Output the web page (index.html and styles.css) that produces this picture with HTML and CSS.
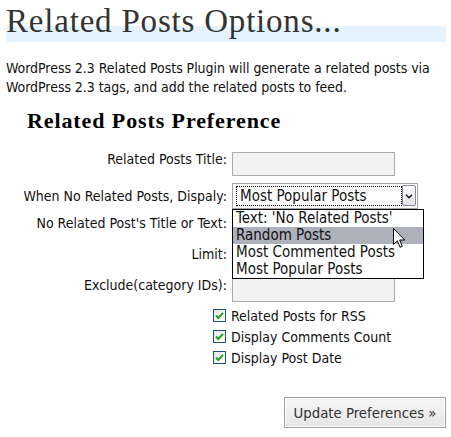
FILE: index.html
```html
<!DOCTYPE html>
<html>
<head>
<meta charset="utf-8">
<link rel="stylesheet" href="styles.css">
</head>
<body>
<div class="wrap">
  <h2 class="title">Related Posts Options...</h2>
  <p class="intro">WordPress 2.3 Related Posts Plugin will generate a related posts via<br>WordPress 2.3 tags, and add the related posts to feed.</p>
  <h3 class="sub">Related Posts Preference</h3>
  <div class="prefs">
    <div class="lbl">Related Posts Title:</div>
    <div class="field"><div class="input"></div></div>

    <div class="lbl lbl-sel">When No Related Posts, Dispaly:</div>
    <div class="field">
      <div class="select">
        <div class="sel-text">Most Popular Posts</div>
        <div class="sel-btn">
          <svg width="14" height="20" viewBox="0 0 14 20"><path d="M3.5 8.5 L7 12 L10.5 8.5" fill="none" stroke="#1a1a1a" stroke-width="1.8"/></svg>
        </div>
        <div class="dropdown">
          <div class="opt">Text: 'No Related Posts'</div>
          <div class="opt hl">Random Posts</div>
          <div class="opt">Most Commented Posts</div>
          <div class="opt">Most Popular Posts</div>
          <svg class="cursor" width="13" height="21" viewBox="0 0 13 21"><path d="M0.5 0.5 L0.5 16.5 L4.3 12.8 L7 19.3 L9.3 18.3 L6.7 12 L11.7 12 Z" fill="#fff" stroke="#000" stroke-width="1" stroke-linejoin="miter"/></svg>
        </div>
      </div>
    </div>

    <div class="lbl">No Related Post's Title or Text:</div>
    <div class="field"><div class="input"></div></div>

    <div class="lbl">Limit:</div>
    <div class="field"><div class="input"></div></div>

    <div class="lbl">Exclude(category IDs):</div>
    <div class="field"><div class="input"></div></div>
  </div>

  <div class="checks">
    <div class="chk"><span class="box"><svg width="11" height="11" viewBox="0 0 11 11"><path d="M2 5.5 L4.3 8 L9 2.8" fill="none" stroke="#1fa51f" stroke-width="2"/></svg></span><span>Related Posts for RSS</span></div>
    <div class="chk"><span class="box"><svg width="11" height="11" viewBox="0 0 11 11"><path d="M2 5.5 L4.3 8 L9 2.8" fill="none" stroke="#1fa51f" stroke-width="2"/></svg></span><span>Display Comments Count</span></div>
    <div class="chk"><span class="box"><svg width="11" height="11" viewBox="0 0 11 11"><path d="M2 5.5 L4.3 8 L9 2.8" fill="none" stroke="#1fa51f" stroke-width="2"/></svg></span><span>Display Post Date</span></div>
  </div>

  <div class="actions">
    <button class="btn" type="button">Update Preferences »</button>
  </div>
</div>
</body>
</html>
```

FILE: styles.css
```css
html, body {
  margin: 0;
  padding: 0;
  background: #fff;
}
body {
  font-family: "DejaVu Sans Condensed", "DejaVu Sans", sans-serif;
  font-size: 14px;
  color: #111;
}
.title {
  margin: 0 5px 0 6px;
  height: 42px;
  box-sizing: border-box;
  padding-top: 1px;
  font: normal 33px/40px "Liberation Serif", serif;
  letter-spacing: 0.8px;
  color: #333;
  background: linear-gradient(to bottom, transparent 26px, #e5f3ff 26px);
}
.intro {
  margin: 17px 0 0 6px;
  line-height: 19px;
  font-size: 14px;
  letter-spacing: -0.05px;
}
.sub {
  margin: 11px 0 0 27px;
  font: bold 22px/26px "Liberation Serif", serif;
  letter-spacing: 0.9px;
  color: #000;
}
.prefs {
  display: grid;
  grid-template-columns: 227px 192px;
  column-gap: 5px;
  row-gap: 7px;
  margin-top: 18px;
}
.lbl {
  text-align: right;
  line-height: 16px;
  white-space: nowrap;
  margin-top: -1px;
}
.lbl-sel {
  margin-top: 5px;
}
.input {
  width: 163px;
  height: 24px;
  box-sizing: border-box;
  border: 1px solid #aaa;
  background: #f2f2f2;
}
.select {
  position: relative;
  width: 186px;
  height: 26px;
  box-sizing: border-box;
  border: 1px solid #a5a5a5;
  background: #fff;
  display: flex;
  align-items: flex-start;
  padding: 2px 1px 2px 3px;
}
.sel-text {
  flex: 1;
  height: 20px;
  box-sizing: border-box;
  border: 1px dotted #000;
  line-height: 18px;
  padding-left: 3px;
  font-size: 15px;
}
.sel-btn {
  width: 14px;
  height: 21px;
  margin-top: -1px;
  box-sizing: border-box;
  border: 1px solid #7f8a99;
  border-radius: 2px;
  background: linear-gradient(#fdfdfd, #dfe3ea);
  display: flex;
  align-items: center;
  justify-content: center;
}
.sel-btn svg {
  display: block;
}
.dropdown {
  position: absolute;
  left: -1px;
  top: 25px;
  width: 192px;
  box-sizing: border-box;
  border: 1px solid #000;
  background: #fff;
}
.opt {
  height: 17px;
  line-height: 17px;
  padding-left: 3px;
  font-size: 15px;
  white-space: nowrap;
}
.opt.hl {
  background: #aeb0bc;
}
.cursor {
  position: absolute;
  left: 160px;
  top: 18px;
}
.checks {
  margin: 4px 0 0 213px;
}
.chk {
  display: flex;
  align-items: flex-start;
  gap: 5px;
  height: 21px;
  line-height: 21px;
}
.box {
  width: 13px;
  height: 13px;
  margin-top: 3px;
  box-sizing: border-box;
  border: 1px solid #1c5180;
  background: linear-gradient(135deg, #e6e6e0, #fff);
  display: flex;
  align-items: center;
  justify-content: center;
}
.box svg {
  display: block;
}
.actions {
  display: flex;
  justify-content: flex-end;
  margin: 28px 5px 0 0;
}
.btn {
  width: 162px;
  height: 31px;
  box-sizing: border-box;
  border: 1px solid #a0a0a0;
  box-shadow: inset 0 0 0 1px #fff;
  background: linear-gradient(#f6f6f6, #e6e6e6);
  font-family: "DejaVu Sans Condensed", "DejaVu Sans", sans-serif;
  font-size: 14.8px;
  color: #333;
  padding: 0;
}
```
